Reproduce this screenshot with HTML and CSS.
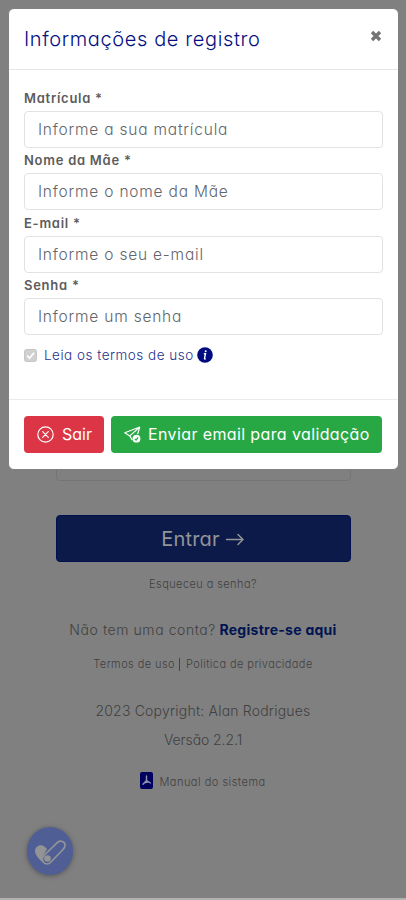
FILE: index.html
```html
<!DOCTYPE html>
<html lang="pt-BR">
<head>
<meta charset="utf-8">
<meta name="viewport" content="width=device-width, initial-scale=1">
<title>Informações de registro</title>
<link rel="stylesheet" href="styles.css">
</head>
<body>
<main class="login">
  <div class="login-field"></div>
  <button class="enter"><span>Entrar</span>
    <svg width="20" height="14" viewBox="0 0 20 14" fill="none" stroke="currentColor" stroke-width="1.5" stroke-linecap="round" stroke-linejoin="round"><path d="M1.500 7.500H18M13 2.500l5 5-5 5"/></svg>
  </button>
  <a class="forgot">Esqueceu a senha?</a>
  <p class="signup"><span class="ask">Não tem uma conta?</span><b>Registre-se aqui</b></p>
  <p class="legal"><a class="terms">Termos de uso</a><i></i><a class="privacy">Politica de privacidade</a></p>
  <p class="copyright">2023 Copyright: Alan Rodrigues</p>
  <p class="version">Versão 2.2.1</p>
  <p class="manual">
    <svg width="13" height="17" viewBox="0 0 13 17"><rect width="13" height="17" rx="2" fill="#00005f"/><path d="M6.500 4v4.500L3 12.200M6.500 8.500l4 2.500M4.500 10.700l4-1" fill="none" stroke="#9094ad" stroke-width="1.400" stroke-linecap="round"/></svg>
    <span>Manual do sistema</span>
  </p>
</main>
<div class="assist">
  <svg width="46" height="48" viewBox="0 0 46 48">
    <path d="M8 24c0-5 6-8 10-4l2 2-4 7 2 8c-4-3-10-8-10-13Z" fill="#929495"/>
    <path d="M17 28.500 30.500 15.500c3-2.500 7.500-1 7.500 2.500 0 2-.8 3.300-2 4.500L23.500 35.500c-2 2-5 2-6.800 0-1.700-2-1.500-5 .3-7Z" fill="#4f5f96" stroke="#929495" stroke-width="1.700"/>
    <circle cx="20.500" cy="31.500" r="3.300" fill="#929495"/>
  </svg>
</div>
<section class="modal">
  <header>
    <h1>Informações de registro</h1>
    <svg class="close" width="12" height="12" viewBox="0 0 12 12"><path d="m2 2 8 8M10 2l-8 8" stroke="#747474" stroke-width="3.400"/></svg>
  </header>
  <form>
    <label>Matrícula *</label>
    <div class="input"><span>Informe a sua matrícula</span></div>
    <label>Nome da Mãe *</label>
    <div class="input"><span>Informe o nome da Mãe</span></div>
    <label>E-mail *</label>
    <div class="input"><span>Informe o seu e-mail</span></div>
    <label>Senha *</label>
    <div class="input"><span>Informe um senha</span></div>
    <div class="agree">
      <svg width="13" height="13" viewBox="0 0 13 13"><rect x=".5" y=".5" width="12" height="12" rx="2" fill="#d0d0d0" stroke="#c5c5c5"/><path d="m3 6.500 2.500 2.700L10 3.700" fill="none" stroke="#fff" stroke-width="1.700"/></svg>
      <span>Leia os termos de uso</span>
      <svg class="info" width="16" height="16" viewBox="0 0 16 16"><circle cx="8" cy="8" r="7.800" fill="#000b80"/><circle cx="8.700" cy="4.200" r="1" fill="#fff"/><path d="M6.800 6.700h1.700l-1 4.700c0 .7.500.7 1.200.3" fill="none" stroke="#fff" stroke-width="1.400"/></svg>
    </div>
  </form>
  <footer>
    <button class="exit">
      <svg width="17" height="17" viewBox="0 0 17 17" fill="none" stroke="currentColor" stroke-width="1.200" stroke-linecap="round"><circle cx="8.500" cy="8.500" r="7.700"/><path d="m5.700 5.700 5.600 5.600M11.300 5.700l-5.600 5.600"/></svg>
      <span>Sair</span>
    </button>
    <button class="send">
      <svg width="17" height="17" viewBox="0 0 17 17" fill="none" stroke="currentColor" stroke-width="1.200" stroke-linejoin="round"><path d="M15.800 1 .8 6.700l5 3.200 2.500 4.200M15.800 1l-2.200 7M15.800 1l-10 8.900"/><circle cx="12.500" cy="12.700" r="3.900" fill="currentColor" stroke="none"/><path d="m10.900 12.800 1.200 1.300 2-2.700" stroke="#28a745"/></svg>
      <span>Enviar email para validação</span>
    </button>
  </footer>
</section>
</body>
</html>
```
FILE: styles.css
```css
* { box-sizing: border-box; }
body {
  margin: 0;
  height: 900px;
  overflow: hidden;
  background: #808080;
  border-bottom: 2px solid #b2b2b2;
  font-family: Inter, "Open Sans", sans-serif;
  font-feature-settings: "cv11", "ss03";
  font-weight: 300;
  color: #404040;
}
h1, p { margin: 0; font-weight: 300; }
span, a, b, label, h1, p { white-space: nowrap; }
button { border: 0; padding: 0; font: inherit; font-feature-settings: inherit; display: flex; align-items: center; }

.login { display: flex; flex-direction: column; align-items: center; padding-top: 440px; }
.login-field { width: 295px; height: 41px; border: 1px solid #747577; border-radius: 4px; }
.enter { margin-top: 34px; width: 295px; height: 47px; border-radius: 4px; background: #0c1a49; border: 1px solid #00104f; color: #929498; justify-content: center; gap: 5px; font-size: 20px; font-weight: 400; letter-spacing: .15px; }
.forgot { margin-top: 13px; font-size: 11px; line-height: 18px; letter-spacing: .42px; }
.signup { margin-top: 25px; display: flex; gap: 3.500px; font-size: 14px; line-height: 24px; }
.ask { letter-spacing: .57px; }
.signup b { font-weight: 700; color: #001452; letter-spacing: .27px; }
.legal { margin-top: 13px; display: flex; align-items: center; font-size: 11px; line-height: 18px; letter-spacing: .42px; }
.legal i { width: 1px; height: 13px; margin: 0 6px 0 4px; background: #444; }
.copyright { margin-top: 26px; font-size: 14px; line-height: 24px; letter-spacing: .2px; }
.version { margin-top: 5px; font-size: 14px; line-height: 24px; letter-spacing: -.08px; }
.manual { margin-top: 18px; display: flex; align-items: center; gap: 6px; font-size: 11px; line-height: 18px; letter-spacing: .5px; }
.manual span { padding-top: 3px; }

.assist { position: absolute; left: 27px; top: 827px; width: 46px; height: 48px; border-radius: 50%; background: #4f5f96; box-shadow: 0 1px 5px #555; }

.modal { position: absolute; left: 8px; top: 8px; width: 391px; height: 462px; background: #fff; border: 1px solid #808080; border-radius: 6px; }
.modal header { height: 61px; padding: 0 16px 0 15px; border-bottom: 1px solid #e4e6e7; display: flex; justify-content: space-between; }
.modal h1 { font-size: 20px; line-height: 30px; padding-top: 15px; color: #05107f; letter-spacing: .62px; }
.close { margin-top: 21px; }
.modal form { height: 330px; padding: 16px 15px 0; border-bottom: 1px solid #e9ebec; }
.modal label { display: block; height: 25px; line-height: 24px; font-size: 13px; font-weight: 600; color: #5c5c5c; letter-spacing: .74px; }
.input { height: 37px; margin-bottom: .400px; border: 1px solid #e0e2e4; border-radius: 4px; padding: 0 13px; font-size: 15.500px; line-height: 36px; color: #5f666c; letter-spacing: .79px; }
.agree { display: flex; align-items: center; margin-top: 10px; height: 20px; font-size: 13.500px; color: #27318b; letter-spacing: .5px; }
.agree span { margin-left: 7px; }
.info { margin-left: 3.500px; }
.modal footer { display: flex; gap: 7px; padding: 16px 15px; }
.modal footer button { height: 37px; border-radius: 4px; color: #fff; font-size: 16px; font-weight: 400; }
.exit { width: 80px; padding-left: 13px; gap: 8px; background: #dc3545; }
.modal footer span { margin-top: -1px; }
.send { width: 271px; padding-left: 13px; gap: 7px; background: #28a745; letter-spacing: .38px; }
```
